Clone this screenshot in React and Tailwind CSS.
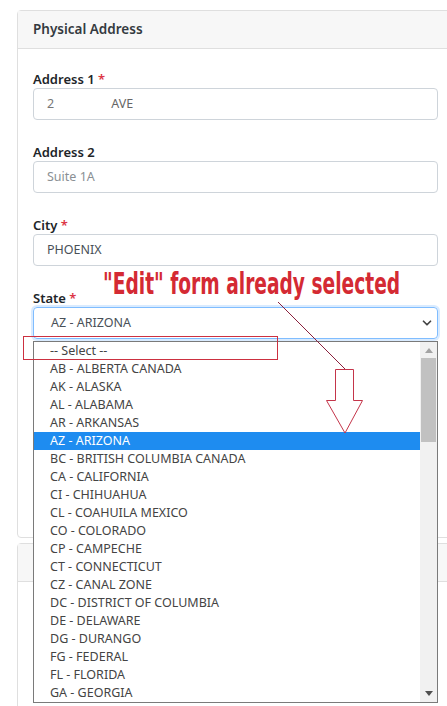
import { ChevronDown } from 'lucide-react';

const states = [
  'AB - ALBERTA CANADA',
  'AK - ALASKA',
  'AL - ALABAMA',
  'AR - ARKANSAS',
  'AZ - ARIZONA',
  'BC - BRITISH COLUMBIA CANADA',
  'CA - CALIFORNIA',
  'CI - CHIHUAHUA',
  'CL - COAHUILA MEXICO',
  'CO - COLORADO',
  'CP - CAMPECHE',
  'CT - CONNECTICUT',
  'CZ - CANAL ZONE',
  'DC - DISTRICT OF COLUMBIA',
  'DE - DELAWARE',
  'DG - DURANGO',
  'FG - FEDERAL',
  'FL - FLORIDA',
  'GA - GEORGIA',
];

function Label({ text, required }) {
  return (
    <label className="block h-[19px] leading-[21px] text-[13px] font-semibold text-[#212529]">
      {text} {required && <span className="text-[#dc3545]">*</span>}
    </label>
  );
}

function Field({ label, required, children, placeholder }) {
  return (
    <div className="mb-[22px]">
      <Label text={label} required={required} />
      <div className="h-[32px] border border-[#ced4da] rounded-[4px] flex items-center px-[13px] text-[12.5px] text-[#495057]">
        {children || <span className="text-[#8a8f94]">{placeholder}</span>}
      </div>
    </div>
  );
}

export default function App() {
  return (
    <div className="relative w-[447px] h-[706px] overflow-hidden bg-white" style={{ fontFamily: '"Noto Sans", "Open Sans", sans-serif' }}>
      <div className="pl-[17px] pt-[10px]">
        <div className="w-[437px] border border-[#dfdfdf] rounded-[4px]">
          <div className="h-[38px] bg-[#f7f7f7] border-b border-[#dfdfdf] flex items-center px-[15px] text-[13.5px] font-semibold text-[#343a40]">
            Physical Address
          </div>
          <div className="px-[15px] pt-[20px] h-[488px]">
            <Field label="Address 1" required>
              <span className="text-[#777]">2</span>
              <span className="ml-[57px] text-[#666]">AVE</span>
            </Field>
            <Field label="Address 2" placeholder="Suite 1A" />
            <Field label="City" required>
              <span>PHOENIX</span>
            </Field>
            <div className="mb-[22px]">
              <Label text="State" required />
              <div className="h-[32px] border border-[#80bdff] rounded-[4px] shadow-[0_0_0_2px_rgba(0,123,255,0.15)] flex items-center justify-between pl-[17px] pr-[3px] text-[12.5px] text-[#495057]">
                <span>AZ - ARIZONA</span>
                <ChevronDown size={14} strokeWidth={3} className="text-[#444]" />
              </div>
            </div>
          </div>
        </div>
        <div className="mt-[5px] w-[437px] border border-[#dfdfdf] rounded-[4px]">
          <div className="h-[38px] bg-[#f7f7f7] border-b border-[#dfdfdf]" />
          <div className="h-[200px]" />
        </div>
      </div>

      {/* open select list */}
      <div className="absolute left-[33px] top-[341px] w-[405px] h-[362px] border border-[#7a7a7a] bg-white flex text-[12.5px] text-[#444]">
        <div className="flex-1 flex flex-col">
          <div className="h-[18px] leading-[18px] pl-[16px] shrink-0">-- Select --</div>
          {states.map((s) => (
            <div
              key={s}
              className={
                s === 'AZ - ARIZONA'
                  ? 'h-[18px] leading-[18px] pl-[16px] shrink-0 bg-[#1e8cf0] text-white'
                  : 'h-[18px] leading-[18px] pl-[16px] shrink-0'
              }
            >
              {s}
            </div>
          ))}
        </div>
        <div className="w-[17px] bg-[#f1f1f1] flex flex-col items-center">
          <div className="h-[16px] flex items-center justify-center">
            <svg width="8" height="5" viewBox="0 0 8 5"><path d="M0 5 L4 0 L8 5 Z" fill="#a3a3a3" /></svg>
          </div>
          <div className="w-[15px] h-[84px] bg-[#c1c1c1]" />
          <div className="flex-1" />
          <div className="h-[18px] flex items-center justify-center">
            <svg width="8" height="5" viewBox="0 0 8 5"><path d="M0 0 L8 0 L4 5 Z" fill="#505050" /></svg>
          </div>
        </div>
      </div>

      {/* annotation */}
      <div className="absolute left-[103px] top-[266px] text-[30px] leading-[36px] font-bold text-[#d42a33] whitespace-nowrap origin-left scale-x-[0.69]" style={{ fontFamily: '"DejaVu Sans Condensed", "Roboto", sans-serif' }}>
        "Edit" form already selected
      </div>
      <div className="absolute left-[23px] top-[336px] w-[255px] h-[24px] border border-[#cc3040]" />
      <svg className="absolute left-0 top-0" width="447" height="706">
        <line x1="278" y1="302" x2="345" y2="369" stroke="#8a1f3c" strokeWidth="1" />
        <path d="M335.5 369.5 H353.5 V400.5 H362.5 L345 433 L326.5 400.5 H335.5 Z" fill="none" stroke="#c4354a" strokeWidth="1" />
      </svg>
    </div>
  );
}
